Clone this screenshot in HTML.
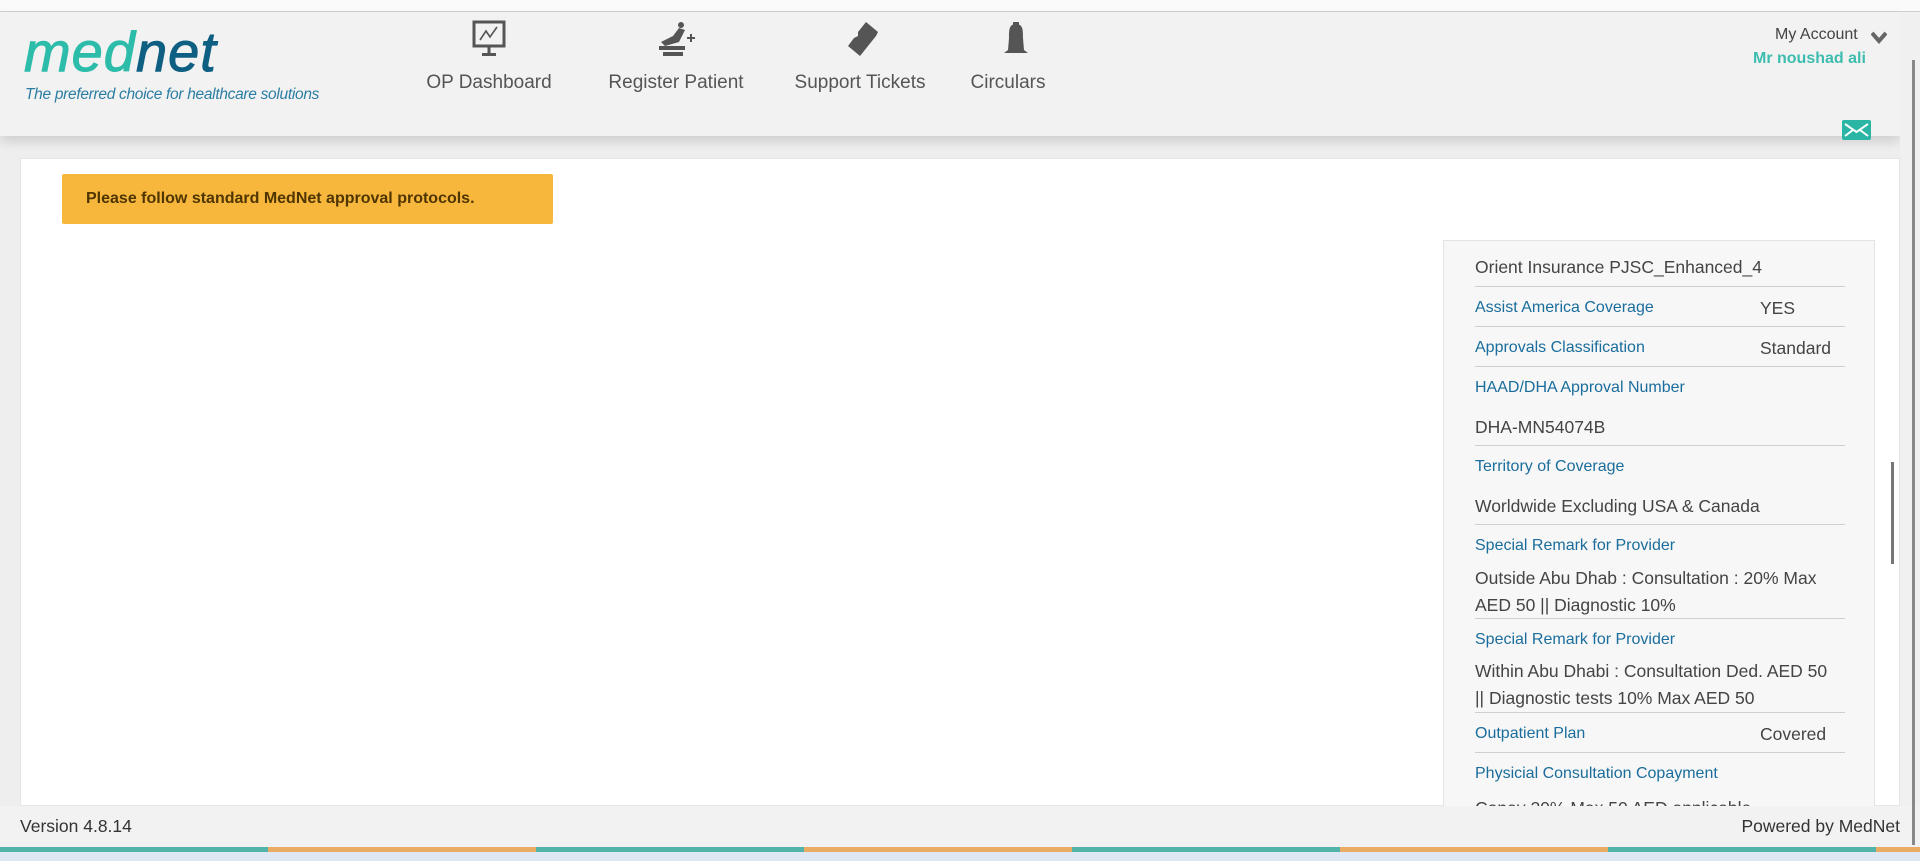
<!DOCTYPE html>
<html><head><meta charset="utf-8"><style>
*{margin:0;padding:0;box-sizing:border-box}
body{width:1920px;height:861px;overflow:hidden;background:#eeeeee;font-family:"Liberation Sans",Arial,sans-serif;position:relative}
.abs{position:absolute}
#top{left:0;top:0;width:1920px;height:12px;background:#fafafa;border-bottom:1px solid #cfcfcf}
#hdr{left:0;top:12px;width:1900px;height:124px;background:#f2f2f2;box-shadow:0 6px 10px rgba(0,0,0,0.12)}
.logo{left:24px;top:10px;font-size:56px;font-style:italic;letter-spacing:1px;line-height:60px;-webkit-text-stroke:1px currentColor}
.tag{left:25px;top:74px;font-size:15.5px;font-style:italic;color:#2b7da3;letter-spacing:-0.3px}
.nav{top:60px;font-size:19px;color:#555;transform:translateX(-50%);white-space:nowrap}
.ico{top:8px;transform:translateX(-50%)}
#main{left:20px;top:158px;width:1880px;height:648px;background:#fff;border:1px solid #e6e6e6}
#alert{left:62px;top:174px;width:491px;height:50px;background:#f6b73c;border-radius:2px;color:#4f3500;font-weight:bold;font-size:16px;line-height:50px;padding-left:24px}
#panel{left:1443px;top:240px;width:432px;height:566px;background:#f7f7f7;border:1px solid #e3e3e3;border-bottom:none;overflow:hidden}
.r{position:absolute;left:31px;width:370px;font-size:16px;color:#1a6d9c}
.v{position:absolute;left:31px;font-size:17.5px;color:#444}
.vr{position:absolute;left:316px;font-size:17.5px;color:#444}
.ln{position:absolute;left:31px;width:370px;height:1px;background:#cfcfcf}
#foot{left:0;top:806px;width:1920px;height:41px;background:#f2f2f2;font-size:17.5px;color:#333}
#bar{left:0;top:847px;width:1920px;height:5px;display:flex}
#bar div{width:268px;height:5px}
#bot{left:0;top:852px;width:1920px;height:9px;background:#dfe7f5}
</style></head><body>
<div id="top" class="abs"></div>
<div id="hdr" class="abs">
 <div class="abs logo"><span style="color:#2dbcaa">med</span><span style="color:#0e5f82">net</span></div>
 <div class="abs tag">The preferred choice for healthcare solutions</div>
 <svg class="abs ico" style="left:489px" width="36" height="38" viewBox="0 0 36 38"><rect x="3" y="2" width="30" height="24" fill="none" stroke="#555" stroke-width="3"/><polyline points="9,20 15,11 19,17 26,7" fill="none" stroke="#555" stroke-width="1.6"/><rect x="16.5" y="26" width="3" height="8" fill="#555"/><rect x="11" y="33" width="14" height="3" fill="#555"/></svg>
 <svg class="abs ico" style="left:676px" width="42" height="38" viewBox="0 0 42 38"><circle cx="26" cy="5" r="3" fill="#555"/><path d="M6 22 L18 16 L24 8 L30 10 L24 22 L10 26 Z" fill="#555"/><rect x="4" y="26" width="26" height="4" fill="#555"/><rect x="8" y="32" width="20" height="4" fill="#555"/><path d="M32 18h8M36 14v8" stroke="#555" stroke-width="2"/></svg>
 <svg class="abs ico" style="left:864px" width="36" height="38" viewBox="0 0 36 38"><path d="M20 2 L32 12 L30 16 L14 36 L2 26 L8 18 L12 16 L12 12 Z" fill="#555"/></svg>
 <svg class="abs ico" style="left:1016px" width="30" height="38" viewBox="0 0 30 38"><rect x="12" y="2" width="6" height="3" fill="#555"/><path d="M15 4 C8 4 8 10 8 18 L7 30 L3 33 L27 33 L23 30 L22 18 C22 10 22 4 15 4Z" fill="#555"/></svg>
 <div class="abs nav" style="left:489px">OP Dashboard</div>
 <div class="abs nav" style="left:676px">Register Patient</div>
 <div class="abs nav" style="left:860px">Support Tickets</div>
 <div class="abs nav" style="left:1008px">Circulars</div>
 <div class="abs" style="left:1775px;top:14px;font-size:16px;color:#444">My Account</div>
 <svg class="abs" style="left:1871px;top:18px" width="16" height="14" viewBox="0 0 16 14"><path d="M1 3 L8 11 L15 3" fill="none" stroke="#666" stroke-width="4"/></svg>
 <div class="abs" style="left:1753px;top:38px;font-size:16px;font-weight:bold;color:#3dbdaf">Mr noushad ali</div>
 <svg class="abs" style="left:1842px;top:108px" width="29" height="20" viewBox="0 0 29 20"><rect width="29" height="20" rx="2" fill="#2ab5a5"/><path d="M3 4 L14.5 12 L26 4 M3 16 L11 10 M26 16 L18 10" stroke="#fff" stroke-width="2" fill="none"/></svg>
</div>
<div id="main" class="abs"></div>
<div id="alert" class="abs">Please follow standard MedNet approval protocols.</div>
<div id="panel" class="abs">
 <div class="v" style="top:16px">Orient Insurance PJSC_Enhanced_4</div>
 <div class="ln" style="top:45px"></div>
 <div class="r" style="top:58px">Assist America Coverage</div><div class="vr" style="top:57px">YES</div>
 <div class="ln" style="top:85px"></div>
 <div class="r" style="top:98px">Approvals Classification</div><div class="vr" style="top:97px">Standard</div>
 <div class="ln" style="top:125px"></div>
 <div class="r" style="top:138px">HAAD/DHA Approval Number</div>
 <div class="v" style="top:176px">DHA-MN54074B</div>
 <div class="ln" style="top:204px"></div>
 <div class="r" style="top:217px">Territory of Coverage</div>
 <div class="v" style="top:255px">Worldwide Excluding USA &amp; Canada</div>
 <div class="ln" style="top:283px"></div>
 <div class="r" style="top:296px">Special Remark for Provider</div>
 <div class="v" style="top:324px;width:370px;line-height:27px">Outside Abu Dhab : Consultation : 20% Max AED 50 || Diagnostic 10%</div>
 <div class="ln" style="top:377px"></div>
 <div class="r" style="top:390px">Special Remark for Provider</div>
 <div class="v" style="top:417px;width:362px;line-height:27px">Within Abu Dhabi : Consultation Ded. AED 50 || Diagnostic tests 10% Max AED 50</div>
 <div class="ln" style="top:471px"></div>
 <div class="r" style="top:484px">Outpatient Plan</div><div class="vr" style="top:483px">Covered</div>
 <div class="ln" style="top:511px"></div>
 <div class="r" style="top:524px">Physicial Consultation Copayment</div>
 <div class="v" style="top:557px">Copay 20% Max 50 AED applicable</div>
</div>
<div class="abs" style="left:1891px;top:462px;width:3px;height:102px;background:#777"></div>
<div class="abs" style="left:1900px;top:12px;width:20px;height:835px;background:#f0f0f0"></div>
<div id="foot" class="abs"><span class="abs" style="left:20px;top:10px">Version 4.8.14</span><span class="abs" style="right:20px;top:10px">Powered by MedNet</span></div>
<div class="abs" style="left:1912px;top:60px;width:3px;height:785px;background:#888"></div>
<div id="bar" class="abs"><div style="background:#52b3a8"></div><div style="background:#e8ad62"></div><div style="background:#52b3a8"></div><div style="background:#e8ad62"></div><div style="background:#52b3a8"></div><div style="background:#e8ad62"></div><div style="background:#52b3a8"></div><div style="background:#e8ad62;width:44px"></div></div>
<div id="bot" class="abs"></div>
</body></html>
